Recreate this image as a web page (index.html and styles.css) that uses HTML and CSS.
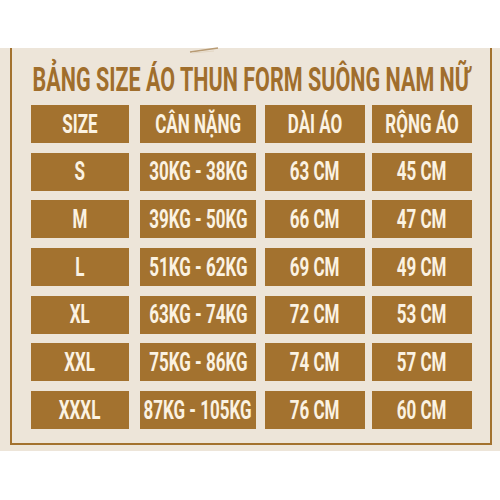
FILE: index.html
```html
<!DOCTYPE html>
<html lang="vi">
<head>
<meta charset="utf-8">
<link rel="stylesheet" href="styles.css">
</head>
<body>
<div class="panel">
  <svg class="deco" width="40" height="10" viewBox="0 0 40 10"><path d="M2 7 L30 3" stroke="#b89b74" stroke-width="1.4" fill="none"/><path d="M4 8 L26 6" stroke="#e3d6c3" stroke-width="1" fill="none"/></svg>
  <div class="frame">
    <h1 class="title"><span class="cx">BẢNG SIZE ÁO THUN FORM SUÔNG NAM NỮ</span></h1>
    <div class="table">
      <div class="cell"><span class="cx">SIZE</span></div>
      <div class="cell"><span class="cx">CÂN NẶNG</span></div>
      <div class="cell"><span class="cx">DÀI ÁO</span></div>
      <div class="cell"><span class="cx">RỘNG ÁO</span></div>

      <div class="cell"><span class="cx">S</span></div>
      <div class="cell"><span class="cx">30KG - 38KG</span></div>
      <div class="cell"><span class="cx">63 CM</span></div>
      <div class="cell"><span class="cx">45 CM</span></div>

      <div class="cell"><span class="cx">M</span></div>
      <div class="cell"><span class="cx">39KG - 50KG</span></div>
      <div class="cell"><span class="cx">66 CM</span></div>
      <div class="cell"><span class="cx">47 CM</span></div>

      <div class="cell"><span class="cx">L</span></div>
      <div class="cell"><span class="cx">51KG - 62KG</span></div>
      <div class="cell"><span class="cx">69 CM</span></div>
      <div class="cell"><span class="cx">49 CM</span></div>

      <div class="cell"><span class="cx">XL</span></div>
      <div class="cell"><span class="cx">63KG - 74KG</span></div>
      <div class="cell"><span class="cx">72 CM</span></div>
      <div class="cell"><span class="cx">53 CM</span></div>

      <div class="cell"><span class="cx">XXL</span></div>
      <div class="cell"><span class="cx">75KG - 86KG</span></div>
      <div class="cell"><span class="cx">74 CM</span></div>
      <div class="cell"><span class="cx">57 CM</span></div>

      <div class="cell"><span class="cx">XXXL</span></div>
      <div class="cell"><span class="cx">87KG - 105KG</span></div>
      <div class="cell"><span class="cx">76 CM</span></div>
      <div class="cell"><span class="cx">60 CM</span></div>
    </div>
  </div>
</div>
</body>
</html>
```
FILE: styles.css
```css
html, body {
  margin: 0;
  padding: 0;
  background: #ffffff;
}
body {
  width: 500px;
  height: 500px;
  overflow: hidden;
  font-family: Roboto, "Liberation Sans", sans-serif;
}
.panel {
  position: relative;
  margin-top: 48px;
  height: 403px;
  background: #ede5d9;
  padding: 0 8px 6px 10px;
  box-sizing: border-box;
  display: flex;
}
.deco {
  position: absolute;
  left: 188px;
  top: -3px;
}
.frame {
  flex: 1;
  min-width: 0;
  border-left: 2px solid #a3722f;
  border-right: 2px solid #a3722f;
  border-bottom: 2px solid #a3722f;
  display: flex;
  flex-direction: column;
}
.title {
  margin: 15px 0 0 0;
  height: 33px;
  font-size: 33.5px;
  line-height: 33px;
  font-weight: 700;
  color: #a06e2c;
  display: flex;
  justify-content: center;
  white-space: nowrap;
}
.cx {
  display: inline-block;
  flex: none;
  transform: scaleX(0.643);
  transform-origin: center;
  white-space: nowrap;
}
.table {
  margin: 9px 0 0 19px;
  display: grid;
  grid-template-columns: 98px 116px 100px 100px;
  grid-auto-rows: 38px;
  column-gap: 9px;
  row-gap: 9.7px;
}
.table .cell:nth-child(4n+2) {
  margin-left: 2px;
  margin-right: -2px;
}
.table .cell:nth-child(4n+3) {
  margin-left: 2px;
  margin-right: -2px;
}
.cell {
  background: #a3722f;
  color: #fbf2e2;
  font-size: 25px;
  font-weight: 700;
  line-height: 1;
  display: flex;
  align-items: center;
  justify-content: center;
  white-space: nowrap;
}
.cell .cx {
  transform: scaleX(0.68);
}
```
